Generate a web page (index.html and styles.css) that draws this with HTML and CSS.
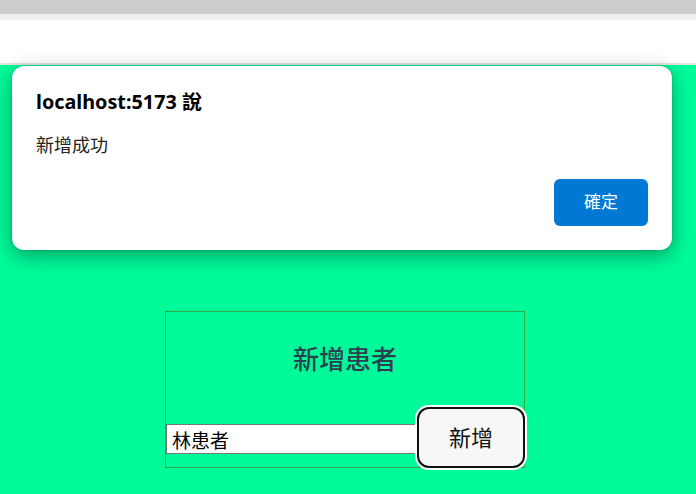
FILE: index.html
```html
<!DOCTYPE html>
<html lang="zh-Hant">
<head>
<meta charset="utf-8">
<title>新增患者</title>
<link rel="stylesheet" href="styles.css">
</head>
<body>
<div class="chrome">
  <div class="tabs"></div>
  <div class="strip"></div>
  <div class="addr"></div>
  <div class="rule"></div>
</div>
<main class="page">
  <section class="card">
    <h1 class="card-title">新增患者</h1>
    <div class="form-row">
      <input class="name-input" type="text" value="林患者">
      <button class="add-btn" type="button">新增</button>
    </div>
  </section>
</main>
<div class="dialog">
  <div class="dialog-title">localhost:5173 說</div>
  <div class="dialog-msg">新增成功</div>
  <div class="dialog-actions">
    <button class="ok-btn" type="button">確定</button>
  </div>
</div>
</body>
</html>
```
FILE: styles.css
```css
html, body {
  margin: 0;
  padding: 0;
  height: 100%;
}
body {
  background: #00fa9a;
  font-family: "Noto Sans", "Noto Sans CJK TC", sans-serif;
  overflow: hidden;
  position: relative;
}
.chrome {
  display: flex;
  flex-direction: column;
}
.tabs {
  height: 14px;
  background: #cccccc;
}
.strip {
  height: 6px;
  background: #f1f1f1;
}
.addr {
  height: 43px;
  background: #ffffff;
}
.rule {
  height: 2px;
  background: #e2e2e2;
}
.page {
  display: flex;
  justify-content: center;
  padding: 246px 6px 0 0;
}
.card {
  box-sizing: border-box;
  width: 360px;
  height: 157px;
  border: 1px solid #2fa846;
  display: flex;
  flex-direction: column;
  align-items: center;
}
.card-title {
  margin: 28px 0 0;
  font-family: "Noto Sans CJK TC", sans-serif;
  font-size: 26px;
  font-weight: 500;
  line-height: 36px;
  color: #2c3e50;
}
.form-row {
  margin-top: auto;
  align-self: stretch;
  display: flex;
  align-items: center;
  margin-bottom: -2px;
  margin-right: -2px;
}
.name-input {
  box-sizing: border-box;
  width: 251px;
  height: 30px;
  margin: 3px -1px 0 0;
  padding: 0 5px;
  border: 1px solid #767676;
  background: #fff;
  font-family: "Noto Sans CJK TC", sans-serif;
  font-size: 19px;
  color: #000;
  outline: none;
}
.add-btn {
  box-sizing: border-box;
  width: 110px;
  height: 63px;
  border: 3px solid #111;
  border-radius: 13px;
  background: #f7f7f7;
  outline: 2px solid #ffffff;
  outline-offset: -1px;
  font-family: "Noto Sans CJK TC", sans-serif;
  font-size: 22px;
  color: #111;
  padding: 0 0 3px;
}
.dialog {
  position: absolute;
  top: 66px;
  left: 12px;
  width: 660px;
  height: 184px;
  box-sizing: border-box;
  background: #fff;
  border-radius: 12px;
  box-shadow: 0 6px 20px rgba(0, 0, 0, 0.35), 0 0 2px rgba(0, 0, 0, 0.25);
  padding: 23px 24px 24px 24px;
  display: flex;
  flex-direction: column;
}
.dialog-title {
  font-family: "Noto Sans", "Noto Sans CJK TC", sans-serif;
  font-weight: 700;
  font-size: 19.8px;
  line-height: 26px;
  color: #000;
}
.dialog-msg {
  margin-top: 17px;
  font-family: "Noto Sans CJK TC", sans-serif;
  font-size: 18px;
  line-height: 24px;
  color: #222;
}
.dialog-actions {
  margin-top: auto;
  display: flex;
  justify-content: flex-end;
}
.ok-btn {
  width: 94px;
  height: 47px;
  border: 0;
  border-radius: 6px;
  background: #0078d4;
  color: #fff;
  font-family: "Noto Sans CJK TC", sans-serif;
  font-size: 17px;
  padding: 0 0 5px;
}
```
